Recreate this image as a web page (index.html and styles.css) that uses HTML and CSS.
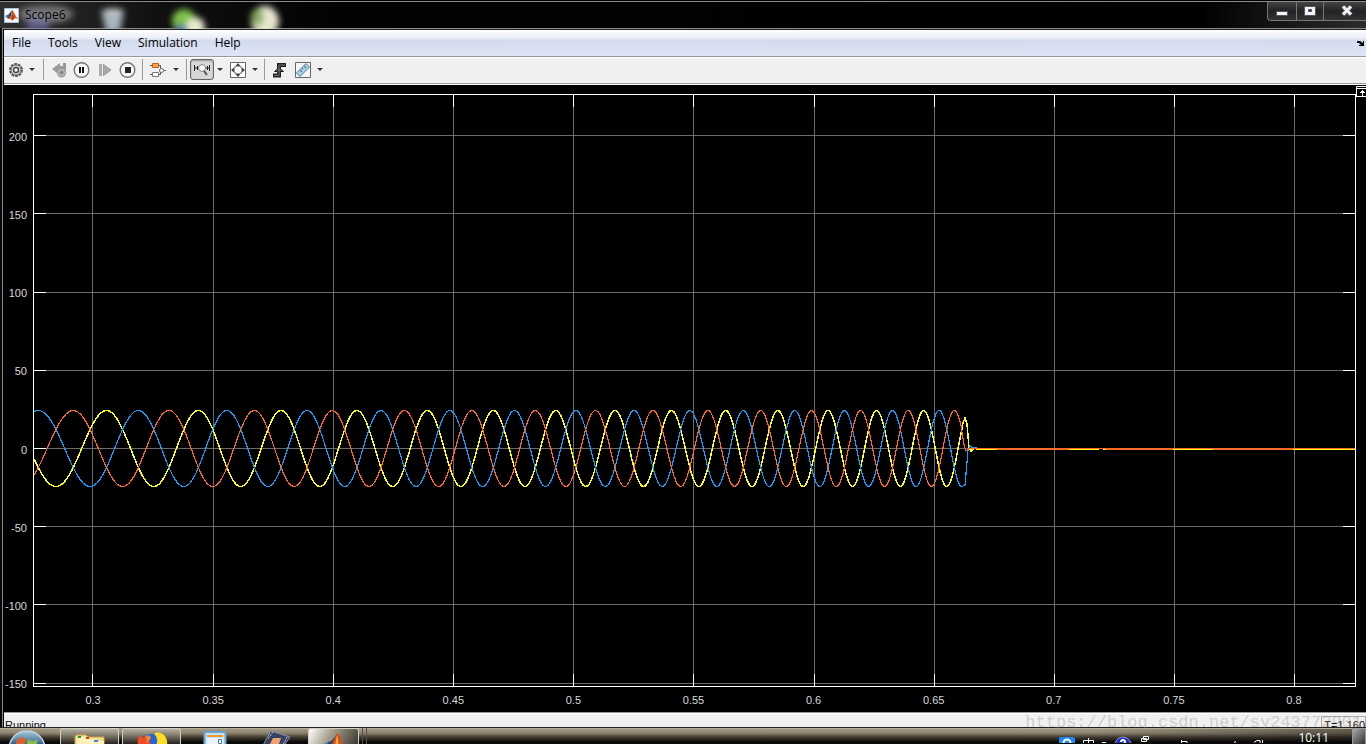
FILE: index.html
```html
<!DOCTYPE html>
<html lang="en">
<head>
<meta charset="utf-8">
<title>Scope6</title>
<link rel="stylesheet" href="styles.css">
</head>
<body>
<div class="screen">
  <header class="titlebar">
    <svg class="wallpaper" width="340" height="28" viewBox="0 0 340 28" aria-hidden="true">
      <g class="wallpaper-blur">
        <ellipse cx="46" cy="13" rx="28" ry="9" fill="#b0b0b0" opacity=".5"/>
        <path d="M27 16h22v14H27z" fill="#8080d0" opacity=".55"/>
        <path d="M101 9h23l-4 22h-14z" fill="#a9b4bc"/>
        <path d="M106 8h14v4h-14z" fill="#e0e0d8"/>
        <circle cx="184" cy="20" r="12" fill="#7fc24a"/>
        <circle cx="195" cy="26" r="10" fill="#e9e8d0"/>
        <path d="M176 23h10v9h-10z" fill="#5b86a5"/>
        <ellipse cx="265" cy="20" rx="14" ry="15" fill="#e8e5cf"/>
        <ellipse cx="257" cy="16" rx="6" ry="8" fill="#83a860"/>
      </g>
    </svg>
    <svg class="app-icon" width="15" height="15" viewBox="0 0 15 15" aria-hidden="true">
      <path d="M.5.5h14v14H.5z" fill="#f4f8fc" stroke="#a9c4dc"/>
      <path d="M1 8l4-2 2 2-3 3z" fill="#3f7fb5"/>
      <path d="M5 6l3-4-1 6-3 3z" fill="#28496d"/>
      <path d="M8 2c2 1 3 6 6 9-2-1-3-1-4 0l-2 2-1-2-3 0 3-3z" fill="#d9541e"/>
      <path d="M8 3c1 3 1 6 0 9l2-2z" fill="#8f2315"/>
    </svg>
    <h1 class="title">Scope6</h1>
    <div class="window-controls">
      <button class="wc" aria-label="Minimize"><svg width="14" height="12" viewBox="0 0 14 12"><path d="M1.500 6.500h11v4h-11z" fill="#f4f4f4" stroke="#555566"/></svg></button>
      <button class="wc wc-max" aria-label="Maximize"><svg width="14" height="12" viewBox="0 0 14 12"><path d="M1.500 1.500h11v9h-11z" fill="#f4f4f4" stroke="#555566"/><path d="M5.500 4.500h3v2h-3z" fill="#333" stroke="#555566"/></svg></button>
      <button class="wc wc-close" aria-label="Close"><svg width="14" height="12" viewBox="0 0 14 12"><path d="M3 1l8 9M11 1l-8 9" stroke="#555566" stroke-width="5"/><path d="M3 1.500l8 8M11 1.500l-8 8" stroke="#f4f4f4" stroke-width="3"/></svg></button>
    </div>
  </header>

  <main class="window">
    <nav class="menubar">
      <button class="menu">File</button><button class="menu">Tools</button><button class="menu">View</button><button class="menu">Simulation</button><button class="menu">Help</button>
      <svg class="dock" width="8" height="6" viewBox="0 0 8 6" aria-hidden="true"><path d="M0 1h3l3 2V1h1v5H2V5h2L2 3H0z" fill="#000"/></svg>
    </nav>

    <div class="toolbar">
      <button class="tool" aria-label="Configuration properties"><svg width="16" height="16" viewBox="0 0 16 16"><circle cx="8" cy="8" r="6" fill="#d8d8d8" stroke="#585858" stroke-width="2" stroke-dasharray="2.700 1"/><circle cx="8" cy="8" r="5" fill="#ddd" stroke="#666"/><circle cx="8" cy="8" r="2.500" fill="#fff" stroke="#444" stroke-width="1.500"/></svg></button>
      <button class="drop drop-wide" aria-label="Configuration options"></button>
      <span class="sep"></span>
      <button class="tool tool-back" aria-label="Step back"><svg width="16" height="16" viewBox="0 0 16 16"><path d="M1 7l8-6v3h3V1h3v10a4.500 4.500 0 1 1-9 0z" fill="#999"/><circle cx="10.500" cy="10.500" r="3" fill="none" stroke="#c8c8c8"/><circle cx="10.500" cy="10.500" r="1" fill="#777"/></svg></button>
      <button class="tool" aria-label="Pause"><svg width="17" height="16" viewBox="0 0 17 16"><circle cx="8.500" cy="8" r="7.300" fill="#f8f8f8" stroke="#777" stroke-width="1.400"/><path d="M6 5h2v6H6zM9 5h2v6H9z" fill="#111"/></svg></button>
      <button class="tool" aria-label="Step forward"><svg width="16" height="16" viewBox="0 0 16 16"><path d="M2 2h3v12H2z" fill="#aaa"/><path d="M6.500 2.500v11L14 8z" fill="#aaa" stroke="#999"/></svg></button>
      <button class="tool" aria-label="Stop"><svg width="17" height="16" viewBox="0 0 17 16"><circle cx="8.500" cy="8" r="7.300" fill="#f8f8f8" stroke="#777" stroke-width="1.400"/><path d="M6 5h6v6H6z" fill="#222"/></svg></button>
      <span class="sep"></span>
      <button class="tool" aria-label="Highlight block"><svg width="18" height="16" viewBox="0 0 18 16"><path d="M1 3.500h10.500V7M1 12.500h10.500V10" fill="none" stroke="#555"/><path d="M3.500 1.500h6v4h-6z" fill="#f5a04a" stroke="#c85a10"/><path d="M3.500 10.500h6v4h-6z" fill="#fff" stroke="#777"/><circle cx="12.500" cy="8.500" r="2" fill="#fff" stroke="#666"/><path d="M15 8.500h2" stroke="#666"/></svg></button>
      <button class="drop" aria-label="Highlight options"></button>
      <span class="sep"></span>
      <button class="tool tool-on" aria-label="Zoom X" aria-pressed="true"><svg width="18" height="14" viewBox="0 0 18 14"><path d="M1.500 2v6M16.500 2v6M4.500 3v4M14.500 3v4M2 5h3M13 5h3" fill="none" stroke="#222"/><circle cx="9" cy="5" r="3.500" fill="#eef6fa" stroke="#888"/><path d="M11 8l3 4" stroke="#555" stroke-width="2"/></svg></button>
      <button class="drop drop-near" aria-label="Zoom options"></button>
      <button class="tool" aria-label="Scale axes limits"><svg width="16" height="16" viewBox="0 0 16 16"><path d="M.5.5h15v15H.5z" fill="#fff" stroke="#666"/><path d="M8 1l3 3.500H5zM8 15l3-3.500H5zM1 8l3.500-3v6zM15 8l-3.500-3v6z" fill="#444"/><path d="M4 4l2 2M12 4l-2 2M4 12l2-2M12 12l-2-2" stroke="#999"/></svg></button>
      <button class="drop drop-near" aria-label="Scale options"></button>
      <span class="sep"></span>
      <button class="tool" aria-label="Triggers"><svg width="16" height="16" viewBox="0 0 16 16"><path d="M1 13.500h6V3h7" fill="none" stroke="#222" stroke-width="4"/><path d="M2.500 9.500l4.500-4 4.500 4z" fill="#555" stroke="#222"/><path d="M2 13.500h5V3h6" fill="none" stroke="#777"/></svg></button>
      <button class="tool tool-ruler" aria-label="Measurements"><svg width="16" height="16" viewBox="0 0 16 16"><path d="M.5.5h15v15H.5z" fill="#f7f7f7" stroke="#666"/><path d="M1.500 11L11 1.500 14.500 5 5 14.500z" fill="#a5cfe4" stroke="#557f98"/><path d="M5 8l2 2M7 6l1 1M9 4l2 2" stroke="#3c657c"/></svg></button>
      <button class="drop drop-near" aria-label="Measurement options"></button>
    </div>

    <section class="scope" aria-label="Scope display">
      <div class="y-axis"><span>200</span><span>150</span><span>100</span><span>50</span><span>0</span><span>-50</span><span>-100</span><span>-150</span></div>
      <svg class="plot" viewBox="0 0 1323 593" preserveAspectRatio="none" role="img" aria-label="Three-phase waveform">
        <g id="grid" class="grid"></g>
        <g id="ticks" class="ticks"></g>
        <path id="yellow" class="trace trace-yellow"/>
        <path id="blue" class="trace trace-blue"/>
        <path id="orange" class="trace trace-orange"/>
        <path class="trace trace-yellow thin" d="M943 355.500H964M1036 355.500h30M1070 355.500h3M1140 355.500h40M1260 355.500h62"/>
        <path class="trace trace-orange" d="M964 355.500h72M1073 355.500h67M1180 355.500h80"/>
        <path class="frame" d="M.5.5h1322v592H.5z"/>
      </svg>
      <svg class="maximize" width="10" height="11" viewBox="0 0 10 11" aria-hidden="true"><path d="M.5 10.500V.5H10M0 2.500h10M0 10.500h10M6.500 4v6M4 6.500h5M5 5.500h3" fill="none" stroke="#fff"/></svg>
      <div class="x-axis"><span>0.3</span><span>0.35</span><span>0.4</span><span>0.45</span><span>0.5</span><span>0.55</span><span>0.6</span><span>0.65</span><span>0.7</span><span>0.75</span><span>0.8</span></div>
    </section>

    <footer class="status"><span>Running</span><span class="time">T=1.160</span></footer>
  </main>

  <div class="taskbar">
    <button class="task start" aria-label="Start"><svg width="40" height="15" viewBox="0 0 40 15"><defs><linearGradient id="orb" x2="0" y2="1"><stop offset="0" stop-color="#a9cbdc"/><stop offset=".4" stop-color="#24598a"/></linearGradient></defs><circle cx="20" cy="19" r="18" fill="url(#orb)" stroke="#bfd4df" stroke-width="1.500"/><path d="M10 10q5-5 9-1l-2 8h-9z" fill="#e0602a"/><path d="M21 9q5 4 10 0l-2 8h-10z" fill="#8dba4a"/></svg></button>
    <button class="task framed" aria-label="Explorer"><svg width="34" height="15" viewBox="0 0 34 15"><path d="M2 15V6q0-2 2-2h9l2 2h16v9z" fill="#f3dc8b" stroke="#c9a94c"/><path d="M5 6h8l1 2h8l1 2h8v5H3z" fill="#fff0b8"/><path d="M5 5h3v2H5z" fill="#159a3a"/><path d="M13 6h3v2h-3z" fill="#d33a20"/><path d="M21 9h4v2h-4z" fill="#2b8ee0"/></svg></button>
    <button class="task framed" aria-label="Firefox"><svg width="34" height="15" viewBox="0 0 34 15"><circle cx="17" cy="17" r="14" fill="#2464d8"/><path d="M3 15q-1-8 2-11 2 1 3 3 3-3 6-2-1 3-1 4 3 1 2 6z" fill="#f04b22"/><path d="M11 5q4-2 5 2l-4 5z" fill="#f58a24"/><path d="M20 15q3-3 2-7-1-4-3-5 4-4 10 1 4 4 3 11z" fill="#ffdb24"/></svg></button>
    <button class="task" aria-label="Calculator"><svg width="24" height="15" viewBox="0 0 24 15"><path d="M1.500 15V4q0-2 2-2h17q2 0 2 2v11" fill="#c4e2f3" stroke="#6ba3cc" stroke-width="2"/><path d="M4 5h16v2H4z" fill="#f09a2c"/><path d="M4 8h16v7H4z" fill="#e9f3f9"/><path d="M15.500 9.500h3v4h-3z" fill="none" stroke="#507da3"/></svg></button>
    <button class="task" aria-label="Device tool"><svg width="36" height="15" viewBox="0 0 36 15"><path d="M12 1l19 6-7 10H3z" fill="#354065" stroke="#8b92a6"/><path d="M14 8h8l-2 6h-9z" fill="#f0a26c"/><path d="M14 2l-5 7M28 7l-4 8" stroke="#c4c7d1" stroke-dasharray="2 1"/></svg></button>
    <button class="task framed task-on" aria-label="MATLAB"><svg width="34" height="15" viewBox="0 0 34 15"><path d="M2 15l9-4 5 4z" fill="#3b83b8"/><path d="M11 11q5-1 9-8l-4 12h-6z" fill="#2a4b6d"/><path d="M20 2q3 1 6 13H14q3-5 6-13z" fill="#db4c20"/><path d="M20 4q2 5 1 11h-3z" fill="#f5b32c"/></svg></button>
    <span class="stack"></span>
    <div class="tray">
      <svg width="206" height="15" viewBox="0 0 206 15" aria-hidden="true">
        <rect x="0" y="9" width="16" height="10" rx="2" fill="#2088f4"/><circle cx="8" cy="15" r="3.500" fill="none" stroke="#fff" stroke-width="2"/>
        <path d="M29.500 10v5M24.500 15v-2.500h10V15M43 14.500h4" fill="none" stroke="#fff"/>
        <circle cx="64" cy="17" r="8" fill="#1f2ec0" stroke="#8c94d8"/><path d="M62 14q0-2 2-2t2 2-2 2" fill="none" stroke="#fff" stroke-width="2"/>
        <path d="M84.500 8.500h5v3h-5zM82.500 10.500h5v3h-5z" fill="#222" stroke="#fff"/>
        <path d="M122.500 12v3M122 13.500h6V15M175 14.500l2-1M195 14.500l3-2h3V15M203.500 12v3" fill="none" stroke="#fff"/>
      </svg>
      <time class="clock">10:11</time>
      <button class="show-desktop" aria-label="Show desktop"></button>
    </div>
  </div>
  <p class="watermark">https://blog.csdn.net/sy243772901</p>
</div>
<script src="scope.js"></script>
</body>
</html>
```
FILE: styles.css
```css
* { box-sizing: border-box; }
body { margin: 0; background: #000; font-family: "Open Sans", "Noto Sans", sans-serif; font-size: 12px; }
button { margin: 0; padding: 0; border: 0; background: none; font: inherit; color: inherit; }
svg { display: block; flex: none; }
.screen { position: relative; display: flex; flex-direction: column; height: 100vh; overflow: hidden; background: #080808; }

.titlebar { position: relative; display: flex; align-items: flex-start; height: 28px; flex: none; padding-left: 4px; border-top: 1px solid #000; box-shadow: inset 0 1px #8a8a8a; background: linear-gradient(90deg, #303030, #101010 160px, #020202 340px, #000 1200px, #2c2c2c); }
.wallpaper { position: absolute; left: 0; top: 0; }
.wallpaper-blur { filter: blur(3px); }
.app-icon { position: relative; margin-top: 7px; }
.title { position: relative; margin: 5px 0 0 6px; font-size: 12px; font-weight: 400; line-height: 18px; color: #000; text-shadow: 0 0 6px #999, 0 0 8px #888; }
.window-controls { display: flex; height: 19px; margin: 1px 0 0 auto; border: 1px solid #777; border-width: 0 0 1px 1px; border-radius: 0 0 0 4px; background: linear-gradient(#444, #222 50%, #333); }
.wc { display: flex; align-items: center; justify-content: center; width: 29px; padding-bottom: 1px; border-right: 1px solid #777; }
.wc-max { width: 27px; }
.wc-close { width: 42px; padding-left: 3px; border: 0; }

.window { flex: 1; min-height: 0; display: flex; flex-direction: column; border-top: 1px solid #888; border-left: 1px solid #888; margin-left: 2px; padding-left: 1px; background: #000; }
.menubar { display: flex; align-items: center; height: 28px; flex: none; padding-left: 8px; gap: 17px; border-top: 1px solid #222; border-bottom: 1px solid #999; background: linear-gradient(#fff, #e6ebf5 9px, #d2daec 10px, #dfe6f6); color: #000; }
.menu { line-height: 18px; }
.dock { margin-left: auto; margin-right: 1px; }
.toolbar { display: flex; align-items: center; height: 28px; flex: none; padding: 0 0 3px 4px; border-top: 1px solid #fff; border-bottom: 1px solid #fff; box-shadow: inset 0 -1px #999; background: #f0f0f0; }
.tool { display: flex; align-items: center; justify-content: center; width: 23px; height: 21px; flex: none; }
.tool:first-child { width: 16px; }
.tool-on { width: 24px; border: 1px solid #666; border-radius: 3px; background: #d8d8d8; box-shadow: inset 0 1px 2px #999; }
.drop { width: 14px; height: 20px; flex: none; display: flex; align-items: center; justify-content: center; }
.drop::before { content: ""; border: 3px solid transparent; border-top-color: #333; border-bottom: 0; }
.drop-near { width: 12px; }
.drop-wide { width: 16px; }
.sep { width: 1px; height: 21px; margin: 0 3px; background: #999; }

.scope { flex: 1; min-height: 0; display: grid; grid-template-columns: 29px 1fr 10px; grid-template-rows: minmax(0, 1fr) 25px; padding-top: 9px; background: #000; color: #d8d8d8; font: 11px/14px "Liberation Sans", Arial, sans-serif; }
.y-axis { display: flex; flex-direction: column; justify-content: space-between; align-items: flex-end; padding: 36px 6px 0 0; margin-bottom: -4px; }
.plot { width: 100%; height: 100%; min-height: 0; }
.maximize { margin-top: -8px; }
.x-axis { grid-column: 2; display: grid; grid-template-columns: repeat(11, 1fr); padding: 6px 2px 0 0; text-align: center; }
.grid { stroke: #6b6b6b; }
.ticks { stroke: #fff; }
.grid, .ticks, .frame { fill: none; shape-rendering: crispEdges; }
.frame { stroke: #fff; }
.trace { fill: none; stroke-width: 1.2; shape-rendering: crispEdges; vector-effect: non-scaling-stroke; }
.trace-yellow { stroke: #ffff11; stroke-width: 1.5; }
.trace-blue { stroke: #139fff; }
.trace-orange { stroke: #ff6929; }
.thin { stroke-width: 1; }

.status { display: flex; justify-content: space-between; height: 15px; flex: none; overflow: hidden; padding: 5px 0 0 1px; border-top: 1px solid #999; box-shadow: inset 0 1px #fff; background: #f0f0f0; color: #111; font: 11px/14px "Liberation Sans", Arial, sans-serif; }
.time { height: 14px; margin-top: -2px; padding: 1px 0 0 2px; border: 1px solid #aaa; }

.taskbar { display: flex; height: 17px; flex: none; overflow: hidden; border-top: 1px solid #222; box-shadow: inset 0 1px #b5ac98; background: linear-gradient(90deg, transparent 370px, rgba(0,0,0,0) 80%, rgba(0,0,0,.4)), linear-gradient(#a89e88, #8c836f 5px, #443f34 9px, #090908 14px); }
.task { display: flex; justify-content: center; align-items: flex-start; width: 62px; flex: none; padding-top: 2px; }
.start { width: 60px; padding-right: 6px; }
.framed { width: 59px; margin-right: 3px; border: 1px solid #d4cfc0; border-bottom: 0; border-radius: 3px 3px 0 0; background: linear-gradient(#b5b09f, #837d6d 6px, #24221d 15px); }
.task-on { width: 51px; background: linear-gradient(120deg, #fff, #aaa592 40%, #3b382f); }
.stack { width: 5px; border: 1px solid #565144; border-width: 0 1px; }
.tray { display: flex; margin-left: auto; }
.clock { margin: 1px 23px 0 33px; color: #fff; line-height: 18px; }
.show-desktop { width: 14px; border: 1px solid #999; border-bottom: 0; background: linear-gradient(135deg, #aaa, #333); }
.watermark { position: absolute; right: 4px; bottom: 11px; margin: 0; font: 17px/20px "Liberation Mono", monospace; color: rgba(150, 150, 140, .4); pointer-events: none; }
```
FILE: scope.js
```javascript
const ZERO = 354.5;
const AMPLITUDE = 38;

// Phase in turns; the frequency rises linearly with time.
function phase(x) {
  const u = x - 73.5;
  return 0.010243 * u + 0.000006932 * u * u;
}

function trace(id, shift, end, tail) {
  const points = [];
  for (let x = 1; x <= end; x += 1) {
    const y = ZERO - AMPLITUDE * Math.cos(2 * Math.PI * (phase(x) - shift));
    points.push(x + " " + y.toFixed(1));
  }
  document.getElementById(id).setAttribute("d", "M" + points.join("L") + tail);
}

trace("yellow", 0, 928, "L930 329L932 324L934 330L936 354L938 357L940 355L944 354");
trace("blue", 1 / 3, 929, "L932 391L934 368L935 356L937 352L940 354L944 354");
trace("orange", 2 / 3, 928, "L931 351L933 357L936 354L939 354.500H1322");

const columns = [59.5, 180.5, 300.5, 420.5, 540.5, 660.5, 781.5, 901.5, 1021.5, 1141.5, 1261.5];
const rows = [41.5, 119.5, 198.5, 276.5, 354.5, 432.5, 510.5, 589.5];
const path = d => '<path d="' + d + '"/>';

document.getElementById("grid").innerHTML =
  path(columns.map(x => `M${x} 0V593`).join("") + rows.map(y => `M0 ${y}H1323`).join(""));
document.getElementById("ticks").innerHTML =
  path(columns.map(x => `M${x} 0v13M${x} 580v13`).join("") + rows.map(y => `M0 ${y}h13M1310 ${y}h13`).join(""));
```
